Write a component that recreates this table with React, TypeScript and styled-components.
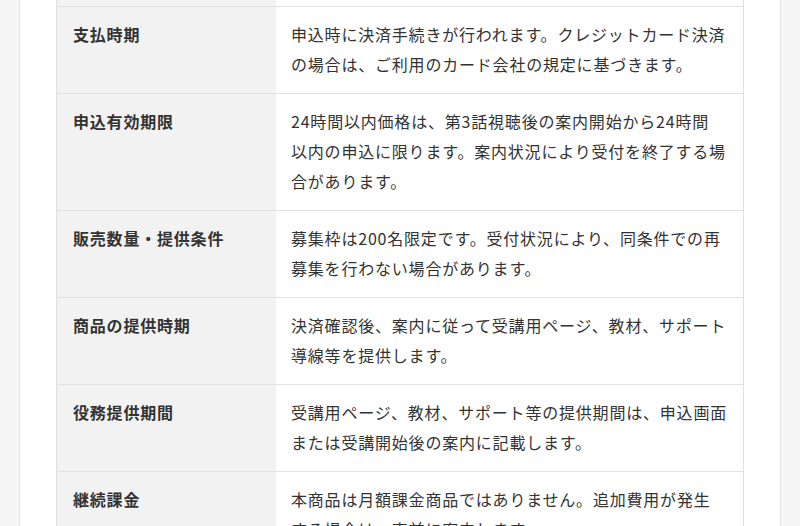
import React from "react";
import styled, { createGlobalStyle } from "styled-components";

const GlobalStyle = createGlobalStyle`
  html, body {
    margin: 0;
    padding: 0;
    background: #f5f5f5;
    overflow: hidden;
  }
  body {
    font-family: "Noto Sans CJK JP", "Noto Sans", sans-serif;
    color: #333;
  }
`;

const Page = styled.div`
  padding: 0 19px;
  height: 526px;
  overflow: hidden;
`;

const Card = styled.section`
  background: #fff;
  border-left: 1px solid #e4e4e4;
  border-right: 1px solid #e4e4e4;
  padding: 0 36px;
  margin-top: -50px;
  min-height: 700px;
`;

const Table = styled.div`
  border-left: 1px solid #e0e0e0;
  border-right: 1px solid #e0e0e0;
`;

const Row = styled.div`
  display: grid;
  grid-template-columns: 219px 1fr;
  border-bottom: 1px solid #e2e2e2;
`;

const Head = styled.div`
  background: #f2f2f2;
  padding: 12px 16px 14px;
  font-size: 16px;
  line-height: 30px;
  font-weight: 700;
  letter-spacing: 0.05em;
  color: #333;
`;

const Data = styled.div`
  background: #fff;
  padding: 12px 15px 14px;
  font-size: 16px;
  line-height: 30px;
  letter-spacing: 0.05em;
  color: #333;
`;

const rows: { label: string; body: React.ReactNode }[] = [
  { label: "支払方法", body: "クレジットカード決済に対応しています。" },
  {
    label: "支払時期",
    body: "申込時に決済手続きが行われます。クレジットカード決済の場合は、ご利用のカード会社の規定に基づきます。",
  },
  {
    label: "申込有効期限",
    body: (
      <>
        24時間以内価格は、第3話視聴後の案内開始から24時間
        <br />
        以内の申込に限ります。案内状況により受付を終了する場合があります。
      </>
    ),
  },
  {
    label: "販売数量・提供条件",
    body: "募集枠は200名限定です。受付状況により、同条件での再募集を行わない場合があります。",
  },
  {
    label: "商品の提供時期",
    body: "決済確認後、案内に従って受講用ページ、教材、サポート導線等を提供します。",
  },
  {
    label: "役務提供期間",
    body: "受講用ページ、教材、サポート等の提供期間は、申込画面または受講開始後の案内に記載します。",
  },
  {
    label: "継続課金",
    body: (
      <>
        本商品は月額課金商品ではありません。追加費用が発生
        <br />
        する場合は、事前に案内します。
      </>
    ),
  },
];

export default function App() {
  return (
    <>
      <GlobalStyle />
      <Page>
        <Card>
          <Table>
            {rows.map((r) => (
              <Row key={r.label}>
                <Head>{r.label}</Head>
                <Data>{r.body}</Data>
              </Row>
            ))}
          </Table>
        </Card>
      </Page>
    </>
  );
}
